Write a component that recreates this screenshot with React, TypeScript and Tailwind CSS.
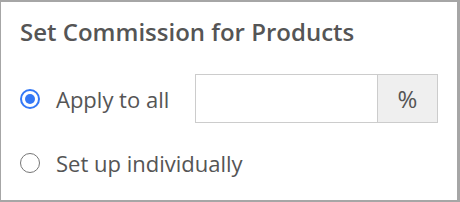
import React from "react";

export default function App() {
  return (
    <div
      className="w-[460px] h-[202px] bg-white border-[#a6a6a6] border-l border-t-2 border-r-[3px] border-b-2 pl-[19px] pt-[14px] text-[#555555]"
      style={{ fontFamily: '"Open Sans", sans-serif' }}
    >
      <div className="text-[24px] leading-[32px] font-semibold">Set Commission for Products</div>
      <div className="mt-[26px] flex items-center h-[49px]">
        <span className="w-[20px] h-[20px] rounded-full border-2 border-[#3478f6] flex items-center justify-center">
          <span className="w-[10px] h-[10px] rounded-full bg-[#3478f6]" />
        </span>
        <span className="ml-[16px] text-[22px] leading-[30px] w-[139px]">Apply to all</span>
        <div className="flex h-[49px] border border-[#cccccc]">
          <div className="w-[181px] bg-white" />
          <div className="w-[60px] bg-[#efefef] border-l border-[#cccccc] flex items-center justify-center text-[24px]">%</div>
        </div>
      </div>
      <div className="mt-[25px] flex items-center h-[30px]">
        <span className="w-[20px] h-[20px] rounded-full border-[1.5px] border-[#767676]" />
        <span className="ml-[16px] text-[22px] leading-[30px]">Set up individually</span>
      </div>
    </div>
  );
}
